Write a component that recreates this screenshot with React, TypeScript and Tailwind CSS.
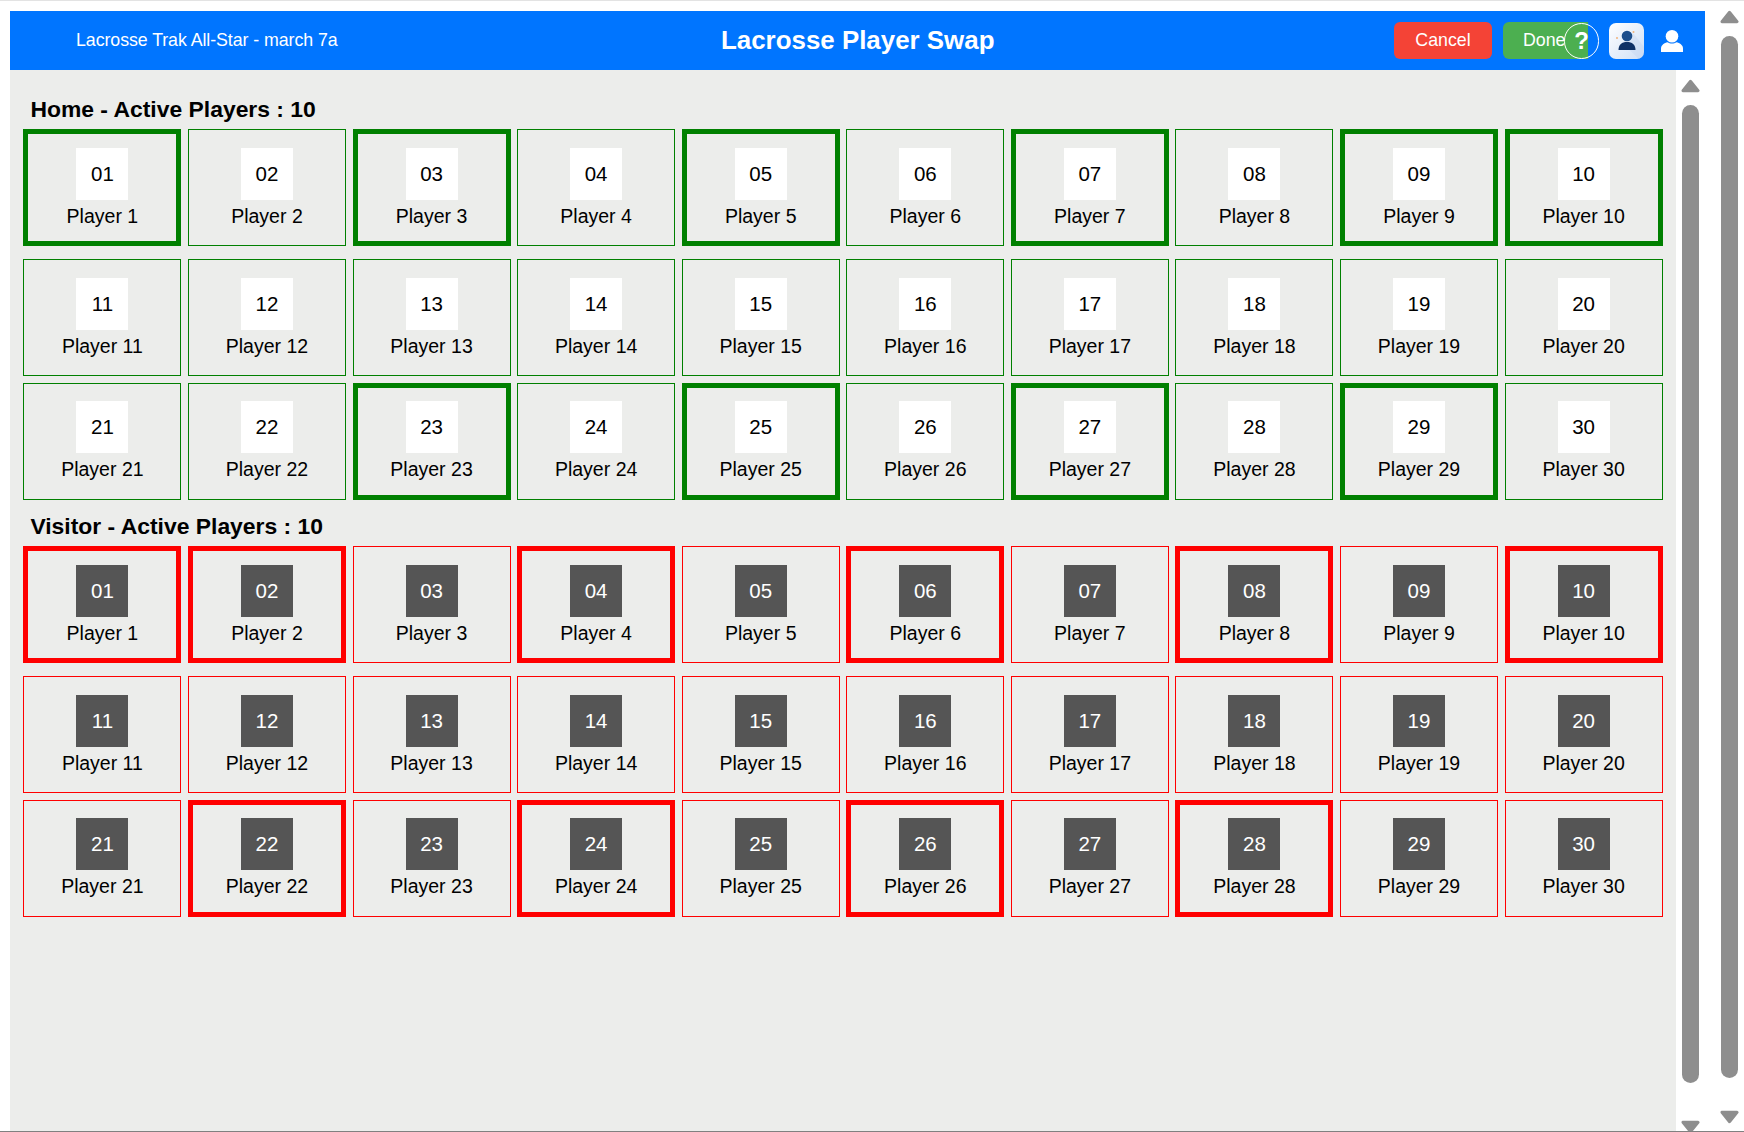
const font = "font-['Liberation_Sans',Arial,sans-serif]";

const homeActive = [1, 3, 5, 7, 9, 10, 23, 25, 27, 29];
const visitorActive = [1, 2, 4, 6, 8, 10, 22, 24, 26, 28];
const rows = [
  [1, 2, 3, 4, 5, 6, 7, 8, 9, 10],
  [11, 12, 13, 14, 15, 16, 17, 18, 19, 20],
  [21, 22, 23, 24, 25, 26, 27, 28, 29, 30],
];

function PlayerCard({ n, team, active, lastRow }: { n: number; team: "home" | "visitor"; active: boolean; lastRow: boolean }) {
  const border =
    team === "home"
      ? active
        ? "border-[5px] border-[#008000]"
        : "border border-[#008000]"
      : active
        ? "border-[5px] border-[#ff0000]"
        : "border border-[#ff0000]";
  const numBox = team === "home" ? "bg-white text-black" : "bg-[#555555] text-white";
  // the last row sits a pixel higher inside its card
  const top = active ? (lastRow ? "mt-[13px]" : "mt-[14px]") : lastRow ? "mt-[17px]" : "mt-[18px]";

  return (
    <div className={`h-[117px] flex flex-col items-center justify-start ${border}`}>
      <div className={`shrink-0 ${top} w-[52px] h-[52px] flex items-center justify-center text-[20.5px] ${numBox}`}>
        {String(n).padStart(2, "0")}
      </div>
      <div className="mt-[4px] text-[19.5px] leading-[24px] text-black">Player {n}</div>
    </div>
  );
}

function Team({ team, active }: { team: "home" | "visitor"; active: number[] }) {
  return (
    <div className="flex flex-col w-[1639.22px]">
      {rows.map((row, i) => (
        <div key={i} className={`grid grid-cols-10 gap-x-[6.58px] ${i === 0 ? "mb-[13px]" : i === 1 ? "mb-[7px]" : ""}`}>
          {row.map((n) => (
            <PlayerCard key={n} n={n} team={team} active={active.includes(n)} lastRow={i === 2} />
          ))}
        </div>
      ))}
    </div>
  );
}

function Arrow({ up, className }: { up?: boolean; className: string }) {
  return (
    <svg viewBox="0 0 20 14" className={`absolute w-[19px] h-[14px] ${className}`}>
      <path
        d={up ? "M10 2 L18 12 L2 12 Z" : "M10 12 L18 2 L2 2 Z"}
        fill="#8e8e8e"
        stroke="#8e8e8e"
        strokeWidth="3"
        strokeLinejoin="round"
      />
    </svg>
  );
}

export default function App() {
  return (
    <div className={`relative w-[1744px] h-[1132px] overflow-hidden bg-white ${font} border-t border-t-[#e3e3e3] border-b border-b-[#808080]`}>
      <div className="flex flex-col absolute left-[10px] top-[10px] w-[1695px] h-[1120px]">
        <header className="relative h-[59px] shrink-0 bg-[#0075ff] flex items-center text-white">
          <div className="ml-[66px] text-[17.8px] tracking-[-0.07px]">Lacrosse Trak All-Star - march 7a</div>
          <div className="absolute left-[711px] top-[13px] text-[25.9px] font-bold leading-[32px]">Lacrosse Player Swap</div>
          <div className="ml-auto flex items-center">
            <button className="w-[98px] h-[37px] rounded-[6px] bg-[#f44336] text-[17.8px] text-white">Cancel</button>
            <button className="ml-[11px] w-[85px] h-[37px] rounded-l-[6px] bg-[#4caf50] text-[17.8px] text-white text-left pl-[20px]">Done</button>
            <div className="w-[35px] h-[36px] -ml-[24px] rounded-full border-[1.5px] border-white flex items-center justify-center text-[24px] font-bold z-10">?</div>
            <div className="ml-[10px] w-[35px] h-[36px] rounded-[7px] bg-gradient-to-br from-white to-[#cfdff6] overflow-hidden">
              <svg viewBox="0 0 35 36" className="w-[35px] h-[36px]">
                <path d="M13 20 L30 36 L35 36 L35 24 L24 10 Z" fill="#bfd2ee" opacity="0.35" />
                <circle cx="18" cy="13" r="5.3" fill="#1c4e8c" />
                <path d="M9.500 27c0-5.500 3.500-8 8.500-8s8.500 2.500 8.500 8z" fill="#0f3166" />
                <circle cx="24.500" cy="9" r="1" fill="#f2b27a" />
                <circle cx="8" cy="15" r="1" fill="#f2b27a" />
              </svg>
            </div>
            <div className="ml-[17px] mr-[22px] w-[22px] h-[22px]">
              <svg viewBox="0 0 22 22" className="w-[22px] h-[22px]" fill="white">
                <circle cx="11" cy="6.300" r="6.300" />
                <path d="M0 22v-3.500c0-3.500 3.500-5.500 6.500-6.200 2.500 1.700 6.500 1.700 9 0 3 .7 6.500 2.700 6.500 6.200V22z" />
              </svg>
            </div>
          </div>
        </header>
        <div className="flex flex-1 min-h-0">
          <main className="w-[1666px] bg-[#ecedeb] pl-[13.4px]">
            <h2 className="pt-[22px] pl-[7px] text-[22.9px] font-bold leading-[34px] h-[59px] text-black">Home - Active Players : 10</h2>
            <Team team="home" active={homeActive} />
            <h2 className="mt-[7px] pt-[2px] pl-[7px] text-[22.9px] font-bold leading-[34px] h-[39px] text-black">Visitor - Active Players : 10</h2>
            <Team team="visitor" active={visitorActive} />
          </main>
          <div className="relative w-[29px] bg-white">
            <Arrow up className="left-[5px] top-[9px]" />
            <div className="absolute left-[6px] top-[35px] w-[17px] h-[978px] rounded-full bg-[#8e8e8e]" />
            <Arrow className="left-[5px] top-[1050px]" />
          </div>
        </div>
      </div>
      <div className="absolute left-[1721px] top-[35px] w-[17px] h-[1042px] rounded-full bg-[#8e8e8e]" />
      <Arrow up className="left-[1720px] top-[9px]" />
      <Arrow className="left-[1720px] top-[1109px]" />
    </div>
  );
}
